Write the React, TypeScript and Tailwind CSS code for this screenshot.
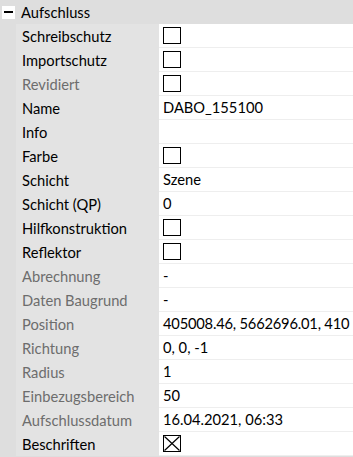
import React from "react";

type Row = { label: string; disabled?: boolean; value?: string; check?: "empty" | "x"; tight?: boolean };

const rows: Row[] = [
  { label: "Schreibschutz", check: "empty" },
  { label: "Importschutz", check: "empty" },
  { label: "Revidiert", disabled: true, check: "empty" },
  { label: "Name", value: "DABO_155100" },
  { label: "Info", value: "" },
  { label: "Farbe", check: "empty" },
  { label: "Schicht", value: "Szene" },
  { label: "Schicht (QP)", value: "0" },
  { label: "Hilfkonstruktion", check: "empty" },
  { label: "Reflektor", check: "empty" },
  { label: "Abrechnung", disabled: true, value: "-" },
  { label: "Daten Baugrund", disabled: true, value: "-" },
  { label: "Position", disabled: true, value: "405008.46, 5662696.01, 410", tight: true },
  { label: "Richtung", disabled: true, value: "0, 0, -1" },
  { label: "Radius", disabled: true, value: "1" },
  { label: "Einbezugsbereich", disabled: true, value: "50" },
  { label: "Aufschlussdatum", disabled: true, value: "16.04.2021, 06:33" },
  { label: "Beschriften", check: "x" },
];

function Box({ x }: { x?: boolean }) {
  return (
    <div className="w-[18px] h-[17px] border border-black bg-white relative">
      {x && (
        <svg className="absolute inset-0" width="16" height="15" viewBox="0 0 16 15">
          <path d="M0.5 0.5 L15.5 14.5 M15.5 0.5 L0.5 14.5" stroke="black" strokeWidth="1.2" />
        </svg>
      )}
    </div>
  );
}

export default function App() {
  return (
    <div
      className="w-[353px] h-[457px] bg-[#dedede] text-[14.7px] text-black overflow-hidden"
      style={{ fontFamily: 'Lato, "Open Sans", sans-serif' }}
    >
      <div className="h-6 flex items-center">
        <div className="ml-[2px] w-[13px] h-[13px] bg-white flex items-center justify-center shrink-0">
          <div className="w-[9px] h-[2px] bg-black" />
        </div>
        <span className="ml-[6px] leading-none whitespace-nowrap">Aufschluss</span>
      </div>
      {rows.map((r) => (
        <div key={r.label} className="flex h-6">
          <div className="w-4 shrink-0 bg-[#dedede]" />
          <div
            className={`w-[143px] shrink-0 bg-[#e3e3e3] flex items-center pl-[6px] leading-none whitespace-nowrap ${
              r.disabled ? "text-[#6d6d6d]" : "text-black"
            }`}
          >
            {r.label}
          </div>
          <div
            className={`flex-1 min-w-0 overflow-hidden bg-white border-b border-[#eeeeee] flex items-center pl-[4px] leading-none whitespace-nowrap ${
              r.tight ? "tracking-[-0.2px]" : ""
            }`}
          >
            {r.check ? <Box x={r.check === "x"} /> : r.value}
          </div>
        </div>
      ))}
    </div>
  );
}
